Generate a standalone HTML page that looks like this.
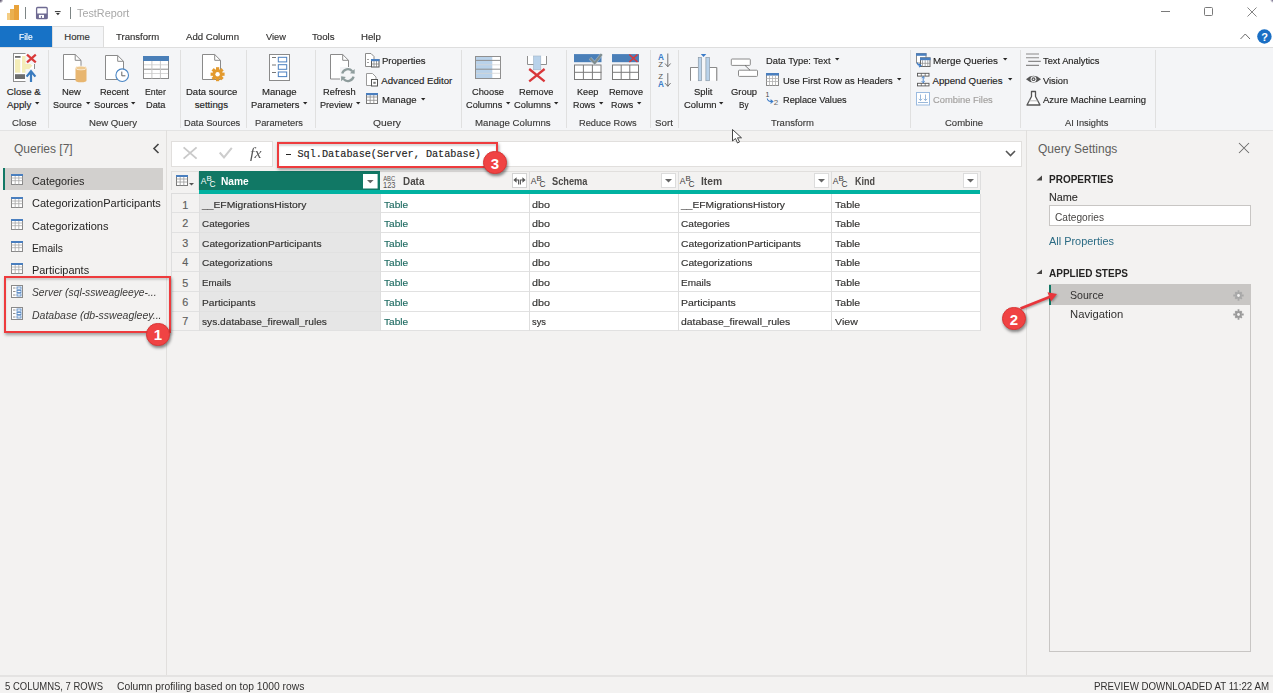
<!DOCTYPE html>
<html><head><meta charset="utf-8">
<style>
*{box-sizing:border-box;margin:0;padding:0}
html,body{width:1273px;height:693px;overflow:hidden;background:#f3f2f1;font-family:"Liberation Sans",sans-serif;color:#323130}
.a{position:absolute;white-space:nowrap}
div.a{-webkit-text-stroke:0.15px currentColor}
svg.a{overflow:visible}
</style></head><body>
<div class="a" style="left:0px;top:0px;width:1273px;height:47px;background:#ffffff;"></div>
<svg class="a" style="left:6px;top:4px;" width="14" height="17" viewBox="0 0 14 17"><rect x="1" y="9" width="5" height="7" fill="#f2c46f" opacity="0.85"/><rect x="4" y="5" width="5" height="11" fill="#eab04f"/><rect x="8" y="1" width="5" height="15" fill="#e8a23a"/></svg>
<div class="a" style="left:25px;top:7px;width:1px;height:12px;background:#7d8585;"></div>
<svg class="a" style="left:35px;top:6px;" width="14" height="14" viewBox="0 0 14 14"><rect x="1.6" y="1.5" width="10.6" height="11.2" rx="1" fill="#fff" stroke="#6e6a92" stroke-width="1.3"/><rect x="1.6" y="7.5" width="10.6" height="5.2" fill="#6e6a92"/><rect x="3.9" y="8.9" width="5.1" height="3" fill="#fff"/><rect x="5.9" y="9.9" width="1.1" height="2" fill="#6e6a92"/></svg>
<svg class="a" style="left:54px;top:10px;" width="8" height="7" viewBox="0 0 8 7"><rect x="0.9" y="1" width="5.7" height="1.1" fill="#444"/><path d="M1.9 3H5.9L3.9 5.3Z" fill="#333"/></svg>
<div class="a" style="left:70px;top:7px;width:1px;height:12px;background:#7d8585;"></div>
<div class="a" style="left:76.50px;top:6.50px;font-size:11px;line-height:13px;color:#a8a8a8;font-weight:normal;font-family:'Liberation Sans';;transform:scaleX(0.9830);transform-origin:0 50%;-webkit-text-stroke:0;">TestReport</div>
<div class="a" style="left:1161px;top:11px;width:9px;height:1px;background:#7a7a7a;"></div>
<div class="a" style="left:1204px;top:7px;width:9px;height:9px;background:none;border:1px solid #7a7a7a;border-radius:1.5px"></div>
<svg class="a" style="left:1247px;top:7px;" width="10" height="10" viewBox="0 0 10 10"><path d="M0.5 0.5L9.5 9.5M9.5 0.5L0.5 9.5" stroke="#777" stroke-width="0.9"/></svg>
<svg class="a" style="left:1240px;top:33px;" width="11" height="7" viewBox="0 0 11 7"><path d="M0.5 6L5.25 1L10 6" stroke="#6b6b6b" stroke-width="1" fill="none"/></svg>
<svg class="a" style="left:1257px;top:29px;" width="15" height="15" viewBox="0 0 15 15"><circle cx="7.4" cy="7.5" r="7.2" fill="#1a6fc4"/><text x="7.5" y="11.6" font-family="Liberation Sans" font-size="11" font-weight="bold" fill="#fff" text-anchor="middle">?</text></svg>
<div class="a" style="left:0px;top:26px;width:52px;height:21px;background:#1772c6;"></div>
<div class="a" style="left:52px;top:26px;width:52px;height:22px;background:#f4f5f7;border:1px solid #dcdcdc;border-bottom:none"></div>
<div class="a" style="left:18.50px;top:31.10px;font-size:9.6px;line-height:12px;color:#ffffff;font-weight:normal;font-family:'Liberation Sans';;transform:scaleX(0.8857);transform-origin:0 50%;">File</div>
<div class="a" style="left:64.30px;top:31.10px;font-size:9.6px;line-height:12px;color:#323130;font-weight:normal;font-family:'Liberation Sans';;">Home</div>
<div class="a" style="left:116.30px;top:31.10px;font-size:9.6px;line-height:12px;color:#323130;font-weight:normal;font-family:'Liberation Sans';;transform:scaleX(0.9963);transform-origin:0 50%;">Transform</div>
<div class="a" style="left:186.40px;top:31.10px;font-size:9.6px;line-height:12px;color:#323130;font-weight:normal;font-family:'Liberation Sans';;transform:scaleX(1.0038);transform-origin:0 50%;">Add Column</div>
<div class="a" style="left:265.80px;top:31.10px;font-size:9.6px;line-height:12px;color:#323130;font-weight:normal;font-family:'Liberation Sans';;transform:scaleX(0.9648);transform-origin:0 50%;">View</div>
<div class="a" style="left:312.00px;top:31.10px;font-size:9.6px;line-height:12px;color:#323130;font-weight:normal;font-family:'Liberation Sans';;transform:scaleX(1.0086);transform-origin:0 50%;">Tools</div>
<div class="a" style="left:361.30px;top:31.10px;font-size:9.6px;line-height:12px;color:#323130;font-weight:normal;font-family:'Liberation Sans';;transform:scaleX(1.0033);transform-origin:0 50%;">Help</div>
<div class="a" style="left:0px;top:47px;width:1273px;height:84px;background:#f4f5f7;border-top:1px solid #dedede;border-bottom:1px solid #e3e3e3"></div>
<div class="a" style="left:48px;top:50px;width:1px;height:78px;background:#e0e0e0;"></div>
<div class="a" style="left:180px;top:50px;width:1px;height:78px;background:#e0e0e0;"></div>
<div class="a" style="left:246px;top:50px;width:1px;height:78px;background:#e0e0e0;"></div>
<div class="a" style="left:315px;top:50px;width:1px;height:78px;background:#e0e0e0;"></div>
<div class="a" style="left:461px;top:50px;width:1px;height:78px;background:#e0e0e0;"></div>
<div class="a" style="left:566px;top:50px;width:1px;height:78px;background:#e0e0e0;"></div>
<div class="a" style="left:650px;top:50px;width:1px;height:78px;background:#e0e0e0;"></div>
<div class="a" style="left:678px;top:50px;width:1px;height:78px;background:#e0e0e0;"></div>
<div class="a" style="left:910px;top:50px;width:1px;height:78px;background:#e0e0e0;"></div>
<div class="a" style="left:1020px;top:50px;width:1px;height:78px;background:#e0e0e0;"></div>
<div class="a" style="left:1155px;top:50px;width:1px;height:78px;background:#e0e0e0;"></div>
<div class="a" style="left:6.80px;top:86.15px;font-size:9.7px;line-height:12px;color:#252423;font-weight:normal;font-family:'Liberation Sans';;">Close &amp;</div>
<div class="a" style="left:62.30px;top:86.15px;font-size:9.7px;line-height:12px;color:#252423;font-weight:normal;font-family:'Liberation Sans';;transform:scaleX(0.9747);transform-origin:0 50%;">New</div>
<div class="a" style="left:99.70px;top:86.15px;font-size:9.7px;line-height:12px;color:#252423;font-weight:normal;font-family:'Liberation Sans';;transform:scaleX(0.9413);transform-origin:0 50%;">Recent</div>
<div class="a" style="left:144.60px;top:86.15px;font-size:9.7px;line-height:12px;color:#252423;font-weight:normal;font-family:'Liberation Sans';;transform:scaleX(0.8982);transform-origin:0 50%;">Enter</div>
<div class="a" style="left:186.00px;top:86.15px;font-size:9.7px;line-height:12px;color:#252423;font-weight:normal;font-family:'Liberation Sans';;transform:scaleX(0.9821);transform-origin:0 50%;">Data source</div>
<div class="a" style="left:261.80px;top:86.15px;font-size:9.7px;line-height:12px;color:#252423;font-weight:normal;font-family:'Liberation Sans';;transform:scaleX(0.9881);transform-origin:0 50%;">Manage</div>
<div class="a" style="left:323.40px;top:86.15px;font-size:9.7px;line-height:12px;color:#252423;font-weight:normal;font-family:'Liberation Sans';;transform:scaleX(0.9610);transform-origin:0 50%;">Refresh</div>
<div class="a" style="left:472.00px;top:86.15px;font-size:9.7px;line-height:12px;color:#252423;font-weight:normal;font-family:'Liberation Sans';;transform:scaleX(0.9579);transform-origin:0 50%;">Choose</div>
<div class="a" style="left:518.60px;top:86.15px;font-size:9.7px;line-height:12px;color:#252423;font-weight:normal;font-family:'Liberation Sans';;transform:scaleX(0.9535);transform-origin:0 50%;">Remove</div>
<div class="a" style="left:576.70px;top:86.15px;font-size:9.7px;line-height:12px;color:#252423;font-weight:normal;font-family:'Liberation Sans';;transform:scaleX(0.9414);transform-origin:0 50%;">Keep</div>
<div class="a" style="left:608.50px;top:86.15px;font-size:9.7px;line-height:12px;color:#252423;font-weight:normal;font-family:'Liberation Sans';;transform:scaleX(0.9424);transform-origin:0 50%;">Remove</div>
<div class="a" style="left:694.20px;top:86.15px;font-size:9.7px;line-height:12px;color:#252423;font-weight:normal;font-family:'Liberation Sans';;transform:scaleX(0.9756);transform-origin:0 50%;">Split</div>
<div class="a" style="left:730.90px;top:86.15px;font-size:9.7px;line-height:12px;color:#252423;font-weight:normal;font-family:'Liberation Sans';;transform:scaleX(0.9689);transform-origin:0 50%;">Group</div>
<div class="a" style="left:7.10px;top:98.95px;font-size:9.7px;line-height:12px;color:#252423;font-weight:normal;font-family:'Liberation Sans';;">Apply</div>
<svg class="a" style="left:34.7px;top:101.6px;" width="5" height="3" viewBox="0 0 5 3"><path d="M0 0H4.4L2.2 2.6Z" fill="#252423"/></svg>
<div class="a" style="left:53.30px;top:98.95px;font-size:9.7px;line-height:12px;color:#252423;font-weight:normal;font-family:'Liberation Sans';;transform:scaleX(0.9348);transform-origin:0 50%;">Source</div>
<svg class="a" style="left:85.8px;top:101.6px;" width="5" height="3" viewBox="0 0 5 3"><path d="M0 0H4.4L2.2 2.6Z" fill="#252423"/></svg>
<div class="a" style="left:93.80px;top:98.95px;font-size:9.7px;line-height:12px;color:#252423;font-weight:normal;font-family:'Liberation Sans';;transform:scaleX(0.9621);transform-origin:0 50%;">Sources</div>
<svg class="a" style="left:131.2px;top:101.6px;" width="5" height="3" viewBox="0 0 5 3"><path d="M0 0H4.4L2.2 2.6Z" fill="#252423"/></svg>
<div class="a" style="left:145.70px;top:98.95px;font-size:9.7px;line-height:12px;color:#252423;font-weight:normal;font-family:'Liberation Sans';;transform:scaleX(0.9527);transform-origin:0 50%;">Data</div>
<div class="a" style="left:194.70px;top:98.95px;font-size:9.7px;line-height:12px;color:#252423;font-weight:normal;font-family:'Liberation Sans';;">settings</div>
<div class="a" style="left:251.10px;top:98.95px;font-size:9.7px;line-height:12px;color:#252423;font-weight:normal;font-family:'Liberation Sans';;transform:scaleX(0.9665);transform-origin:0 50%;">Parameters</div>
<svg class="a" style="left:303.4px;top:101.6px;" width="5" height="3" viewBox="0 0 5 3"><path d="M0 0H4.4L2.2 2.6Z" fill="#252423"/></svg>
<div class="a" style="left:320.00px;top:98.95px;font-size:9.7px;line-height:12px;color:#252423;font-weight:normal;font-family:'Liberation Sans';;transform:scaleX(0.9400);transform-origin:0 50%;">Preview</div>
<svg class="a" style="left:355.7px;top:101.6px;" width="5" height="3" viewBox="0 0 5 3"><path d="M0 0H4.4L2.2 2.6Z" fill="#252423"/></svg>
<div class="a" style="left:466.10px;top:98.95px;font-size:9.7px;line-height:12px;color:#252423;font-weight:normal;font-family:'Liberation Sans';;transform:scaleX(0.9494);transform-origin:0 50%;">Columns</div>
<svg class="a" style="left:506.2px;top:101.6px;" width="5" height="3" viewBox="0 0 5 3"><path d="M0 0H4.4L2.2 2.6Z" fill="#252423"/></svg>
<div class="a" style="left:514.20px;top:98.95px;font-size:9.7px;line-height:12px;color:#252423;font-weight:normal;font-family:'Liberation Sans';;transform:scaleX(0.9625);transform-origin:0 50%;">Columns</div>
<svg class="a" style="left:554.3px;top:101.6px;" width="5" height="3" viewBox="0 0 5 3"><path d="M0 0H4.4L2.2 2.6Z" fill="#252423"/></svg>
<div class="a" style="left:573.00px;top:98.95px;font-size:9.7px;line-height:12px;color:#252423;font-weight:normal;font-family:'Liberation Sans';;transform:scaleX(0.9161);transform-origin:0 50%;">Rows</div>
<svg class="a" style="left:598.9px;top:101.6px;" width="5" height="3" viewBox="0 0 5 3"><path d="M0 0H4.4L2.2 2.6Z" fill="#252423"/></svg>
<div class="a" style="left:610.70px;top:98.95px;font-size:9.7px;line-height:12px;color:#252423;font-weight:normal;font-family:'Liberation Sans';;transform:scaleX(0.9161);transform-origin:0 50%;">Rows</div>
<svg class="a" style="left:636.6px;top:101.6px;" width="5" height="3" viewBox="0 0 5 3"><path d="M0 0H4.4L2.2 2.6Z" fill="#252423"/></svg>
<div class="a" style="left:683.90px;top:98.95px;font-size:9.7px;line-height:12px;color:#252423;font-weight:normal;font-family:'Liberation Sans';;transform:scaleX(0.9733);transform-origin:0 50%;">Column</div>
<svg class="a" style="left:719.1px;top:101.6px;" width="5" height="3" viewBox="0 0 5 3"><path d="M0 0H4.4L2.2 2.6Z" fill="#252423"/></svg>
<div class="a" style="left:739.40px;top:98.95px;font-size:9.7px;line-height:12px;color:#252423;font-weight:normal;font-family:'Liberation Sans';;transform:scaleX(0.8398);transform-origin:0 50%;">By</div>
<div class="a" style="left:11.50px;top:117.45px;font-size:9.7px;line-height:12px;color:#3b3a39;font-weight:normal;font-family:'Liberation Sans';;transform:scaleX(0.9887);transform-origin:0 50%;">Close</div>
<div class="a" style="left:89.00px;top:117.45px;font-size:9.7px;line-height:12px;color:#3b3a39;font-weight:normal;font-family:'Liberation Sans';;transform:scaleX(0.9906);transform-origin:0 50%;">New Query</div>
<div class="a" style="left:183.80px;top:117.45px;font-size:9.7px;line-height:12px;color:#3b3a39;font-weight:normal;font-family:'Liberation Sans';;transform:scaleX(0.9574);transform-origin:0 50%;">Data Sources</div>
<div class="a" style="left:254.90px;top:117.45px;font-size:9.7px;line-height:12px;color:#3b3a39;font-weight:normal;font-family:'Liberation Sans';;transform:scaleX(0.9585);transform-origin:0 50%;">Parameters</div>
<div class="a" style="left:372.50px;top:117.45px;font-size:9.7px;line-height:12px;color:#3b3a39;font-weight:normal;font-family:'Liberation Sans';;transform:scaleX(1.0610);transform-origin:0 50%;">Query</div>
<div class="a" style="left:474.50px;top:117.45px;font-size:9.7px;line-height:12px;color:#3b3a39;font-weight:normal;font-family:'Liberation Sans';;transform:scaleX(0.9969);transform-origin:0 50%;">Manage Columns</div>
<div class="a" style="left:578.60px;top:117.45px;font-size:9.7px;line-height:12px;color:#3b3a39;font-weight:normal;font-family:'Liberation Sans';;transform:scaleX(0.9550);transform-origin:0 50%;">Reduce Rows</div>
<div class="a" style="left:654.60px;top:117.45px;font-size:9.7px;line-height:12px;color:#3b3a39;font-weight:normal;font-family:'Liberation Sans';;transform:scaleX(1.0067);transform-origin:0 50%;">Sort</div>
<div class="a" style="left:771.40px;top:117.45px;font-size:9.7px;line-height:12px;color:#3b3a39;font-weight:normal;font-family:'Liberation Sans';;transform:scaleX(0.9799);transform-origin:0 50%;">Transform</div>
<div class="a" style="left:944.60px;top:117.45px;font-size:9.7px;line-height:12px;color:#3b3a39;font-weight:normal;font-family:'Liberation Sans';;transform:scaleX(0.9824);transform-origin:0 50%;">Combine</div>
<div class="a" style="left:1064.60px;top:117.45px;font-size:9.7px;line-height:12px;color:#3b3a39;font-weight:normal;font-family:'Liberation Sans';;transform:scaleX(0.9572);transform-origin:0 50%;">AI Insights</div>
<div class="a" style="left:381.50px;top:55.25px;font-size:9.7px;line-height:12px;color:#252423;font-weight:normal;font-family:'Liberation Sans';;transform:scaleX(0.9851);transform-origin:0 50%;">Properties</div>
<div class="a" style="left:381.20px;top:74.55px;font-size:9.7px;line-height:12px;color:#252423;font-weight:normal;font-family:'Liberation Sans';;">Advanced Editor</div>
<div class="a" style="left:381.50px;top:93.70px;font-size:9.7px;line-height:12px;color:#252423;font-weight:normal;font-family:'Liberation Sans';;transform:scaleX(0.9881);transform-origin:0 50%;">Manage</div>
<svg class="a" style="left:420.7px;top:97.5px;" width="5" height="3" viewBox="0 0 5 3"><path d="M0 0H4.4L2.2 2.6Z" fill="#252423"/></svg>
<div class="a" style="left:765.50px;top:55.25px;font-size:9.7px;line-height:12px;color:#252423;font-weight:normal;font-family:'Liberation Sans';;transform:scaleX(0.9631);transform-origin:0 50%;">Data Type: Text</div>
<svg class="a" style="left:834.5px;top:58.4px;" width="5" height="3" viewBox="0 0 5 3"><path d="M0 0H4.4L2.2 2.6Z" fill="#252423"/></svg>
<div class="a" style="left:782.70px;top:74.55px;font-size:9.7px;line-height:12px;color:#252423;font-weight:normal;font-family:'Liberation Sans';;transform:scaleX(0.9711);transform-origin:0 50%;">Use First Row as Headers</div>
<svg class="a" style="left:897px;top:77.6px;" width="5" height="3" viewBox="0 0 5 3"><path d="M0 0H4.4L2.2 2.6Z" fill="#252423"/></svg>
<div class="a" style="left:782.70px;top:93.70px;font-size:9.7px;line-height:12px;color:#252423;font-weight:normal;font-family:'Liberation Sans';;transform:scaleX(0.9488);transform-origin:0 50%;">Replace Values</div>
<div class="a" style="left:932.50px;top:55.25px;font-size:9.7px;line-height:12px;color:#252423;font-weight:normal;font-family:'Liberation Sans';;transform:scaleX(1.0144);transform-origin:0 50%;">Merge Queries</div>
<svg class="a" style="left:1002.5px;top:58.4px;" width="5" height="3" viewBox="0 0 5 3"><path d="M0 0H4.4L2.2 2.6Z" fill="#252423"/></svg>
<div class="a" style="left:932.50px;top:74.55px;font-size:9.7px;line-height:12px;color:#252423;font-weight:normal;font-family:'Liberation Sans';;">Append Queries</div>
<svg class="a" style="left:1007.5px;top:77.6px;" width="5" height="3" viewBox="0 0 5 3"><path d="M0 0H4.4L2.2 2.6Z" fill="#252423"/></svg>
<div class="a" style="left:932.50px;top:93.70px;font-size:9.7px;line-height:12px;color:#a19f9d;font-weight:normal;font-family:'Liberation Sans';;transform:scaleX(0.9657);transform-origin:0 50%;">Combine Files</div>
<div class="a" style="left:1043.30px;top:55.25px;font-size:9.7px;line-height:12px;color:#252423;font-weight:normal;font-family:'Liberation Sans';;transform:scaleX(0.9610);transform-origin:0 50%;">Text Analytics</div>
<div class="a" style="left:1043.30px;top:74.55px;font-size:9.7px;line-height:12px;color:#252423;font-weight:normal;font-family:'Liberation Sans';;transform:scaleX(0.9611);transform-origin:0 50%;">Vision</div>
<div class="a" style="left:1043.30px;top:93.70px;font-size:9.7px;line-height:12px;color:#252423;font-weight:normal;font-family:'Liberation Sans';;transform:scaleX(0.9818);transform-origin:0 50%;">Azure Machine Learning</div>
<svg class="a" style="left:0;top:0" width="1273" height="693" viewBox="0 0 1273 693"><rect x="13.5" y="53.5" width="21" height="28" fill="#fff" stroke="#8f8f8f"/><rect x="15" y="56" width="5.6" height="1.8" fill="#6d6d6d"/><rect x="15" y="59.3" width="5.3" height="13.4" fill="#f4edb8"/><path d="M22 56H26V61L32.5 65.5L26 72.7H22Z" fill="#f4edb8"/><rect x="15" y="74.2" width="10" height="4.8" fill="#6d6d6d"/><rect x="25.5" y="53" width="11.5" height="11" fill="#f4f5f7"/><rect x="25.5" y="69" width="11.5" height="13.5" fill="#f4f5f7"/><path d="M27 54.6L35.8 62.4M35.8 54.6L27 62.4" stroke="#d93a3a" stroke-width="2.2"/><path d="M26.6 76.6L31 71.2L35.4 76.6M31 71.5V82" stroke="#3a7bbf" stroke-width="2.2" fill="none"/><path d="M63.5 54.5H75.2L81.0 60.3V79.5H63.5Z" fill="#fff" stroke="#8a8a8a"/><path d="M75.2 54.5V60.3H81.0" fill="none" stroke="#8a8a8a"/><path d="M75.5 68V80.5A5.5 1.8 0 0 0 86.5 80.5V68Z" fill="#e8b670"/><ellipse cx="81" cy="68" rx="5.5" ry="1.9" fill="#efc98f" stroke="#fff" stroke-width="0.6"/><path d="M105.5 55.5H117.7L123.5 61.3V79.5H105.5Z" fill="#fff" stroke="#8a8a8a"/><path d="M117.7 55.5V61.3H123.5" fill="none" stroke="#8a8a8a"/><circle cx="122.2" cy="75.2" r="6.3" fill="#fff" stroke="#4a86c5" stroke-width="1.1"/><path d="M121.8 71.6V75.8H125.4" stroke="#555" stroke-width="0.9" fill="none"/><rect x="143.5" y="56.5" width="25" height="22" fill="#fff" stroke="#8a8a8a"/><rect x="143" y="56" width="26" height="5" fill="#4a7fb8"/><path d="M144 64.8H168M144 73.5H168" stroke="#d8d8d8" stroke-width="1"/><path d="M144 69.2H168" stroke="#8a8a8a" stroke-width="1"/><path d="M151.9 61V78.5M160.4 61V78.5" stroke="#c8c8c8" stroke-width="1"/><path d="M202.5 54.5H214.7L220.5 60.3V79.5H202.5Z" fill="#fff" stroke="#8a8a8a"/><path d="M214.7 54.5V60.3H220.5" fill="none" stroke="#8a8a8a"/><g transform="translate(217.6 74.2)"><g fill="#e39a2e"><rect x="-1.6" y="-7" width="3.2" height="3.4" transform="rotate(0)"/><rect x="-1.6" y="-7" width="3.2" height="3.4" transform="rotate(45)"/><rect x="-1.6" y="-7" width="3.2" height="3.4" transform="rotate(90)"/><rect x="-1.6" y="-7" width="3.2" height="3.4" transform="rotate(135)"/><rect x="-1.6" y="-7" width="3.2" height="3.4" transform="rotate(180)"/><rect x="-1.6" y="-7" width="3.2" height="3.4" transform="rotate(225)"/><rect x="-1.6" y="-7" width="3.2" height="3.4" transform="rotate(270)"/><rect x="-1.6" y="-7" width="3.2" height="3.4" transform="rotate(315)"/><circle r="5"/></g><circle r="2.2" fill="#fff"/></g><rect x="269.5" y="54.5" width="20" height="26" fill="#fff" stroke="#8a8a8a"/><path d="M272 57.5H276M272 65H276M272 72.5H276" stroke="#777" stroke-width="1"/><rect x="278.3" y="57.3" width="8.4" height="4.6" fill="#fff" stroke="#4a7fbf" stroke-width="1"/><rect x="278.3" y="64.7" width="8.4" height="4.6" fill="#fff" stroke="#4a7fbf" stroke-width="1"/><rect x="278.3" y="72" width="8.4" height="4.6" fill="#fff" stroke="#4a7fbf" stroke-width="1"/><path d="M330.5 54.5H342.7L348.5 60.3V79.0H330.5Z" fill="#fff" stroke="#8a8a8a"/><path d="M342.7 54.5V60.3H348.5" fill="none" stroke="#8a8a8a"/><rect x="340" y="67" width="15.5" height="15.5" fill="#f4f5f7"/><path d="M342.20 73.57A5.9 5.9 0 0 1 352.28 71.15M353.60 76.63A5.9 5.9 0 0 1 343.52 79.05" stroke="#8e9c9c" stroke-width="2.3" fill="none"/><path d="M354.69 73.83L354.66 69.01L349.91 73.29Z M341.11 76.37L341.14 81.19L345.89 76.91Z" fill="#8e9c9c"/><path d="M365.5 53.5H371L374 56.5V66.5H365.5Z" fill="#fff" stroke="#8a8a8a"/><path d="M367 59.5H369M367 62.5H369" stroke="#888" stroke-width="0.8"/><rect x="371.5" y="59.5" width="7.5" height="7.5" fill="#fff" stroke="#555"/><rect x="371" y="59" width="8.5" height="2.2" fill="#4a7fbf"/><path d="M374 61V67M376.5 61V67M371.5 64H379" stroke="#777" stroke-width="0.7"/><path d="M366.5 73.5H372.5L376 77V85.5H366.5Z" fill="#fff" stroke="#9a9a9a"/><rect x="371.5" y="79.5" width="6" height="6.5" fill="#fff" stroke="#555"/><rect x="373.3" y="81.8" width="2.4" height="2" fill="#777"/><rect x="366.5" y="93.5" width="11" height="10" fill="#fff" stroke="#777"/><rect x="366" y="93" width="12" height="2.2" fill="#4a7fbf"/><path d="M366.5 97H377.5M366.5 100.3H377.5M370.2 95V103.5M373.8 95V103.5" stroke="#8a8a8a" stroke-width="0.8"/><rect x="475.5" y="56.5" width="25" height="22" fill="#fff" stroke="#8f8f8f"/><rect x="476" y="57" width="16.3" height="21" fill="#b9d2ea"/><path d="M476 60.4H500M476 69.2H500" stroke="#8f8f8f" stroke-width="1"/><path d="M476 64.8H500M476 73.3H500" stroke="#d6d6d6" stroke-width="0.8"/><path d="M527.5 56V64.5H546.5V56" fill="#fff" stroke="#8f8f8f"/><rect x="533.5" y="56" width="7.3" height="13.8" fill="#b9d2ea" stroke="#9fb4c8" stroke-width="0.6"/><path d="M529.2 69L544.6 81.4M544.6 69L529.2 81.4" stroke="#d9373a" stroke-width="2.3"/><rect x="574.5" y="65" width="26.5" height="14.5" fill="#fff" stroke="#7a7a7a"/><path d="M574 72.3H601.5M583.4 65V79.5M592.4 65V79.5" stroke="#7a7a7a" stroke-width="1"/><rect x="574" y="54.1" width="27.5" height="8.1" fill="#4a7fb8"/><rect x="612.5" y="65" width="26" height="14.5" fill="#fff" stroke="#7a7a7a"/><path d="M612 72.3H639M621.2 65V79.5M629.8 65V79.5" stroke="#7a7a7a" stroke-width="1"/><rect x="612" y="54.1" width="27" height="8.1" fill="#4a7fb8"/><path d="M590 58.3L594.7 63.2L601.7 54.2" stroke="#c8d2dc" stroke-width="3.4" fill="none" opacity="0.6"/><path d="M590 58.3L594.7 63.2L601.7 54.2" stroke="#7f8c8d" stroke-width="2.1" fill="none"/><path d="M629.3 54.5L637.5 62M637.5 54.5L629.3 62" stroke="#d9373a" stroke-width="1.6"/><text x="658" y="59.9" font-family="Liberation Sans" font-weight="bold" font-size="8.2" fill="#3a7bc8">A</text><text x="658.3" y="66.9" font-family="Liberation Sans" font-size="7.8" fill="#555">Z</text><path d="M667.8 53.5V66.7M665 63.5L667.8 66.7L670.6 63.5" stroke="#666" stroke-width="0.9" fill="none"/><text x="658" y="86.5" font-family="Liberation Sans" font-weight="bold" font-size="8.2" fill="#3a7bc8">A</text><text x="658.3" y="79.3" font-family="Liberation Sans" font-size="7.8" fill="#555">Z</text><path d="M667.8 73.1V86.3M665 83.1L667.8 86.3L670.6 83.1" stroke="#666" stroke-width="0.9" fill="none"/><path d="M690.5 80.7V67.5H698M709.7 67.5H716.7V80.7" stroke="#8a8a8a" fill="#fff"/><rect x="690.5" y="67.5" width="7.5" height="13" fill="#fff"/><rect x="709.7" y="67.5" width="7" height="13" fill="#fff"/><path d="M690.5 80.7V67.5H698M709.7 67.5H716.7V80.7" stroke="#8a8a8a" fill="none"/><rect x="698.3" y="57.5" width="3.2" height="23.2" fill="#b9d2ea" stroke="#8a9aa8" stroke-width="0.7"/><rect x="705.9" y="57.5" width="3.6" height="23.2" fill="#b9d2ea" stroke="#8a9aa8" stroke-width="0.7"/><path d="M700.8 53.9H706.3L703.55 56.9Z" fill="#3a7bc8"/><rect x="731.3" y="59" width="19" height="6.4" rx="0.8" fill="#fff" stroke="#8a8a8a"/><rect x="738.5" y="70.2" width="19" height="6.2" rx="0.8" fill="#fff" stroke="#8a8a8a"/><path d="M745 65.4L750 70.2" stroke="#555" stroke-width="0.8"/><rect x="766.5" y="73.5" width="12" height="12" fill="#fff" stroke="#8a8a8a"/><rect x="766" y="73" width="13" height="2.6" fill="#4a7fbf"/><path d="M766.5 78.5H778.5M766.5 81.5H778.5M769.5 75V85.5M772.5 75V85.5M775.5 75V85.5" stroke="#b0b0b0" stroke-width="0.8"/><text x="765.5" y="97.2" font-family="Liberation Sans" font-size="7" fill="#444">1</text><text x="773.7" y="104.5" font-family="Liberation Sans" font-size="8" fill="#666">2</text><path d="M767.3 98.5Q767.5 101.6 772.5 101.6M770.5 99.8L772.8 101.6L770.5 103.4" stroke="#3a7bc8" stroke-width="1.1" fill="none"/><rect x="916.5" y="53.5" width="9.5" height="9.5" fill="#fff" stroke="#8a8a8a"/><rect x="916" y="53.3" width="10.5" height="2.5" fill="#4a7fbf"/><rect x="920.5" y="57.8" width="9.5" height="8.7" fill="#fff" stroke="#666"/><rect x="920" y="57.6" width="10.5" height="2.6" fill="#4a7fbf"/><path d="M922.5 60.2V66.5M925.2 60.2V66.5M927.8 60.2V66.5M920.5 63.3H930" stroke="#888" stroke-width="0.7"/><path d="M917.3 62.5Q917.3 65.5 920.8 65.5M919 63.8L921 65.5L919 67.2" stroke="#3a7bc8" stroke-width="1.1" fill="none"/><rect x="917.5" y="73.3" width="11.5" height="2.8" fill="#fff" stroke="#555" stroke-width="0.9"/><path d="M921.3 73.3V76M925.2 73.3V76" stroke="#555" stroke-width="0.7"/><rect x="917.5" y="83.3" width="11.5" height="2.6" fill="#fff" stroke="#555" stroke-width="0.9"/><path d="M921.3 83.3V86M925.2 83.3V86" stroke="#555" stroke-width="0.7"/><path d="M923.2 76.5V82.8M921.6 78.2L923.2 76.6L924.8 78.2M921.6 81.1L923.2 82.7L924.8 81.1" stroke="#3a7bc8" stroke-width="0.9" fill="none"/><rect x="916.5" y="92.5" width="13" height="12.5" fill="#fff" stroke="#9bbbe0"/><path d="M920.5 94.5V100.5M918.8 98.8L920.5 100.6L922.2 98.8M925.5 94.5V100.5M923.8 98.8L925.5 100.6L927.2 98.8M918 102.5H928" stroke="#8fb0d6" stroke-width="0.9" fill="none"/><path d="M1026 54H1039M1026 57.7H1039M1028.2 61.4H1040.8M1026 65.4H1039" stroke="#8a8a8a" stroke-width="1.1"/><path d="M1026 79.2Q1033.5 72.5 1041 79.2Q1033.5 86 1026 79.2Z" fill="#555"/><circle cx="1033.5" cy="79.2" r="2.9" fill="#f4f5f7"/><circle cx="1033.5" cy="79.2" r="1.9" fill="#555"/><circle cx="1033.5" cy="79.2" r="0.8" fill="#f4f5f7"/><path d="M1031.5 91.5H1035.5V96.5L1040 105H1027L1031.5 96.5Z" fill="#fff" stroke="#555" stroke-width="1.3" stroke-linejoin="round"/><path d="M1029.3 100.8H1037.7" stroke="#aaa" stroke-width="0.8"/></svg>
<div class="a" style="left:166px;top:130px;width:1px;height:545px;background:#e1dfdd;"></div>
<div class="a" style="left:1026px;top:130px;width:1px;height:545px;background:#e1dfdd;"></div>
<div class="a" style="left:0px;top:675px;width:1273px;height:2px;background:#e4e3e2;"></div>
<div class="a" style="left:14.00px;top:142.10px;font-size:12px;line-height:14px;color:#605e5c;font-weight:normal;font-family:'Liberation Sans';;-webkit-text-stroke:0;">Queries [7]</div>
<svg class="a" style="left:152px;top:143px;" width="8" height="11" viewBox="0 0 8 11"><path d="M6.5 1L2 5.5L6.5 10" stroke="#444" stroke-width="1.6" fill="none"/></svg>
<div class="a" style="left:3px;top:168px;width:160px;height:22px;background:#d2d0ce;"></div>
<div class="a" style="left:3px;top:168px;width:2px;height:22px;background:#117865;"></div>
<svg class="a" style="left:11px;top:174.4px;" width="12" height="11" viewBox="0 0 12 11"><rect x="0.5" y="0.5" width="11" height="10" fill="#fff" stroke="#8a8a8a"/><rect x="0" y="0" width="12" height="2" fill="#4a7fbf"/><path d="M0.5 4H11.5M0.5 6.7H11.5M4.2 2V10.5M7.8 2V10.5" stroke="#a8a8a8" stroke-width="0.8"/></svg>
<div class="a" style="left:32.40px;top:174.10px;font-size:11.4px;line-height:14px;color:#252423;font-weight:normal;font-family:'Liberation Sans';;transform:scaleX(0.9529);transform-origin:0 50%;-webkit-text-stroke:0;">Categories</div>
<svg class="a" style="left:11px;top:196.75px;" width="12" height="11" viewBox="0 0 12 11"><rect x="0.5" y="0.5" width="11" height="10" fill="#fff" stroke="#8a8a8a"/><rect x="0" y="0" width="12" height="2" fill="#4a7fbf"/><path d="M0.5 4H11.5M0.5 6.7H11.5M4.2 2V10.5M7.8 2V10.5" stroke="#a8a8a8" stroke-width="0.8"/></svg>
<div class="a" style="left:32.40px;top:196.45px;font-size:11.4px;line-height:14px;color:#252423;font-weight:normal;font-family:'Liberation Sans';;transform:scaleX(0.9694);transform-origin:0 50%;-webkit-text-stroke:0;">CategorizationParticipants</div>
<svg class="a" style="left:11px;top:219px;" width="12" height="11" viewBox="0 0 12 11"><rect x="0.5" y="0.5" width="11" height="10" fill="#fff" stroke="#8a8a8a"/><rect x="0" y="0" width="12" height="2" fill="#4a7fbf"/><path d="M0.5 4H11.5M0.5 6.7H11.5M4.2 2V10.5M7.8 2V10.5" stroke="#a8a8a8" stroke-width="0.8"/></svg>
<div class="a" style="left:32.40px;top:218.70px;font-size:11.4px;line-height:14px;color:#252423;font-weight:normal;font-family:'Liberation Sans';;transform:scaleX(0.9664);transform-origin:0 50%;-webkit-text-stroke:0;">Categorizations</div>
<svg class="a" style="left:11px;top:241.2px;" width="12" height="11" viewBox="0 0 12 11"><rect x="0.5" y="0.5" width="11" height="10" fill="#fff" stroke="#8a8a8a"/><rect x="0" y="0" width="12" height="2" fill="#4a7fbf"/><path d="M0.5 4H11.5M0.5 6.7H11.5M4.2 2V10.5M7.8 2V10.5" stroke="#a8a8a8" stroke-width="0.8"/></svg>
<div class="a" style="left:32.40px;top:240.90px;font-size:11.4px;line-height:14px;color:#252423;font-weight:normal;font-family:'Liberation Sans';;transform:scaleX(0.9009);transform-origin:0 50%;-webkit-text-stroke:0;">Emails</div>
<svg class="a" style="left:11px;top:263.4px;" width="12" height="11" viewBox="0 0 12 11"><rect x="0.5" y="0.5" width="11" height="10" fill="#fff" stroke="#8a8a8a"/><rect x="0" y="0" width="12" height="2" fill="#4a7fbf"/><path d="M0.5 4H11.5M0.5 6.7H11.5M4.2 2V10.5M7.8 2V10.5" stroke="#a8a8a8" stroke-width="0.8"/></svg>
<div class="a" style="left:32.40px;top:263.10px;font-size:11.4px;line-height:14px;color:#252423;font-weight:normal;font-family:'Liberation Sans';;transform:scaleX(0.9594);transform-origin:0 50%;-webkit-text-stroke:0;">Participants</div>
<svg class="a" style="left:11px;top:285.1px;" width="12" height="13" viewBox="0 0 12 13"><rect x="0.5" y="0.5" width="11" height="12" fill="#fff" stroke="#8a8a8a"/><path d="M2 3H4.5M2 6.5H4.5M2 10H4.5" stroke="#777" stroke-width="0.8"/><rect x="6" y="2" width="4" height="2.2" fill="none" stroke="#4a7fbf" stroke-width="0.8"/><rect x="6" y="5.4" width="4" height="2.2" fill="none" stroke="#4a7fbf" stroke-width="0.8"/><rect x="6" y="8.8" width="4" height="2.2" fill="none" stroke="#4a7fbf" stroke-width="0.8"/></svg>
<div class="a" style="left:32.40px;top:285.30px;font-size:11.4px;line-height:14px;color:#3b3a39;font-weight:normal;font-family:'Liberation Sans';font-style:italic;transform:scaleX(0.9021);transform-origin:0 50%;-webkit-text-stroke:0;">Server (sql-ssweagleeye-...</div>
<svg class="a" style="left:11px;top:307.4px;" width="12" height="13" viewBox="0 0 12 13"><rect x="0.5" y="0.5" width="11" height="12" fill="#fff" stroke="#8a8a8a"/><path d="M2 3H4.5M2 6.5H4.5M2 10H4.5" stroke="#777" stroke-width="0.8"/><rect x="6" y="2" width="4" height="2.2" fill="none" stroke="#4a7fbf" stroke-width="0.8"/><rect x="6" y="5.4" width="4" height="2.2" fill="none" stroke="#4a7fbf" stroke-width="0.8"/><rect x="6" y="8.8" width="4" height="2.2" fill="none" stroke="#4a7fbf" stroke-width="0.8"/></svg>
<div class="a" style="left:32.40px;top:307.60px;font-size:11.4px;line-height:14px;color:#3b3a39;font-weight:normal;font-family:'Liberation Sans';font-style:italic;transform:scaleX(0.9226);transform-origin:0 50%;-webkit-text-stroke:0;">Database (db-ssweagleey...</div>
<div class="a" style="left:171px;top:141px;width:102px;height:26px;background:#ffffff;border:1px solid #e1dfdd"></div>
<svg class="a" style="left:183px;top:147px;" width="14" height="12" viewBox="0 0 14 12"><path d="M0.6 0.4L13.6 11.6M13.6 0.4L0.6 11.6" stroke="#c9c9c9" stroke-width="1.9"/></svg>
<svg class="a" style="left:218px;top:147px;" width="15" height="12" viewBox="0 0 15 12"><path d="M1.7 5.5L6 10.5L13.8 0.8" stroke="#cdcdcd" stroke-width="2" fill="none"/></svg>
<div class="a" style="left:250.00px;top:144.70px;font-size:14.5px;line-height:17px;color:#555555;font-weight:normal;font-family:'Liberation Serif';font-style:italic;transform:scaleX(1.0985);transform-origin:0 50%;-webkit-text-stroke:0;">fx</div>
<div class="a" style="left:277px;top:141px;width:745px;height:26px;background:#ffffff;border:1px solid #e1dfdd"></div>
<svg class="a" style="left:1005px;top:150px;" width="11" height="7" viewBox="0 0 11 7"><path d="M1 1L5.5 5.5L10 1" stroke="#555" stroke-width="1.6" fill="none"/></svg>
<div class="a" style="left:297.50px;top:148.60px;font-size:10.2px;line-height:12px;color:#252423;font-weight:normal;font-family:'Liberation Mono';;">Sql.Database(Server, Database)</div>
<div class="a" style="left:285.7px;top:153.5px;width:5.5px;height:1.7px;background:#252423;"></div>
<div class="a" style="left:171px;top:171px;width:809px;height:19px;background:#f3f2f1;border-top:1px solid #e1dfdd"></div>
<div class="a" style="left:199px;top:171px;width:181px;height:19px;background:#117865;"></div>
<div class="a" style="left:199px;top:190px;width:781px;height:4px;background:#01b2a1;"></div>
<div class="a" style="left:171px;top:194px;width:28px;height:19.400000000000006px;background:#f3f2f1;"></div>
<div class="a" style="left:199px;top:194px;width:181px;height:19.400000000000006px;background:#e6e6e6;"></div>
<div class="a" style="left:380px;top:194px;width:600px;height:19.400000000000006px;background:#ffffff;"></div>
<div class="a" style="left:171px;top:213.4px;width:28px;height:19.5px;background:#f3f2f1;"></div>
<div class="a" style="left:199px;top:213.4px;width:181px;height:19.5px;background:#e6e6e6;"></div>
<div class="a" style="left:380px;top:213.4px;width:600px;height:19.5px;background:#ffffff;"></div>
<div class="a" style="left:171px;top:232.9px;width:28px;height:19.900000000000006px;background:#f3f2f1;"></div>
<div class="a" style="left:199px;top:232.9px;width:181px;height:19.900000000000006px;background:#e6e6e6;"></div>
<div class="a" style="left:380px;top:232.9px;width:600px;height:19.900000000000006px;background:#ffffff;"></div>
<div class="a" style="left:171px;top:252.8px;width:28px;height:19.30000000000001px;background:#f3f2f1;"></div>
<div class="a" style="left:199px;top:252.8px;width:181px;height:19.30000000000001px;background:#e6e6e6;"></div>
<div class="a" style="left:380px;top:252.8px;width:600px;height:19.30000000000001px;background:#ffffff;"></div>
<div class="a" style="left:171px;top:272.1px;width:28px;height:19.399999999999977px;background:#f3f2f1;"></div>
<div class="a" style="left:199px;top:272.1px;width:181px;height:19.399999999999977px;background:#e6e6e6;"></div>
<div class="a" style="left:380px;top:272.1px;width:600px;height:19.399999999999977px;background:#ffffff;"></div>
<div class="a" style="left:171px;top:291.5px;width:28px;height:20.0px;background:#f3f2f1;"></div>
<div class="a" style="left:199px;top:291.5px;width:181px;height:20.0px;background:#e6e6e6;"></div>
<div class="a" style="left:380px;top:291.5px;width:600px;height:20.0px;background:#ffffff;"></div>
<div class="a" style="left:171px;top:311.5px;width:28px;height:19.0px;background:#f3f2f1;"></div>
<div class="a" style="left:199px;top:311.5px;width:181px;height:19.0px;background:#e6e6e6;"></div>
<div class="a" style="left:380px;top:311.5px;width:600px;height:19.0px;background:#ffffff;"></div>
<div class="a" style="left:171px;top:212.4px;width:809px;height:1px;background:#e1e1e1;"></div>
<div class="a" style="left:171px;top:231.9px;width:809px;height:1px;background:#e1e1e1;"></div>
<div class="a" style="left:171px;top:251.8px;width:809px;height:1px;background:#e1e1e1;"></div>
<div class="a" style="left:171px;top:271.1px;width:809px;height:1px;background:#e1e1e1;"></div>
<div class="a" style="left:171px;top:290.5px;width:809px;height:1px;background:#e1e1e1;"></div>
<div class="a" style="left:171px;top:310.5px;width:809px;height:1px;background:#e1e1e1;"></div>
<div class="a" style="left:171px;top:329.5px;width:809px;height:1px;background:#e1e1e1;"></div>
<div class="a" style="left:171px;top:194px;width:1px;height:137px;background:#dedede;"></div>
<div class="a" style="left:199px;top:194px;width:1px;height:137px;background:#dedede;"></div>
<div class="a" style="left:380px;top:194px;width:1px;height:137px;background:#dedede;"></div>
<div class="a" style="left:529px;top:194px;width:1px;height:137px;background:#dedede;"></div>
<div class="a" style="left:678px;top:194px;width:1px;height:137px;background:#dedede;"></div>
<div class="a" style="left:831px;top:194px;width:1px;height:137px;background:#dedede;"></div>
<div class="a" style="left:980px;top:194px;width:1px;height:137px;background:#dedede;"></div>
<div class="a" style="left:171px;top:171px;width:1px;height:19px;background:#dedede;"></div>
<div class="a" style="left:529px;top:171px;width:1px;height:19px;background:#dedede;"></div>
<div class="a" style="left:678px;top:171px;width:1px;height:19px;background:#dedede;"></div>
<div class="a" style="left:831px;top:171px;width:1px;height:19px;background:#dedede;"></div>
<div class="a" style="left:980px;top:171px;width:1px;height:19px;background:#dedede;"></div>
<div class="a" style="left:198px;top:171px;width:1px;height:19px;background:#dedede;"></div>
<div class="a" style="left:171px;top:192.5px;width:28px;height:1px;background:#dcdcdc;"></div>
<svg class="a" style="left:176px;top:175px;" width="19" height="11" viewBox="0 0 19 11"><rect x="0.5" y="0.5" width="11" height="10" fill="#fff" stroke="#7a7a7a"/><rect x="0" y="0" width="12" height="2" fill="#4a7fbf"/><path d="M0.5 4H11.5M0.5 7H11.5M4.2 2V10.5M7.8 2V10.5" stroke="#9a9a9a" stroke-width="0.8"/><path d="M13 8H18L15.5 10.5Z" fill="#555"/></svg>
<svg class="a" style="left:201px;top:175px;" width="14" height="11" viewBox="0 0 14 11"><text x="-0.2" y="9" font-family="Liberation Sans" font-size="8.6" fill="#ffffff">A</text><text x="5.4" y="5.9" font-family="Liberation Sans" font-size="7.8" fill="#ffffff">B</text><text x="8.6" y="12" font-family="Liberation Sans" font-size="8.4" fill="#ffffff">C</text></svg>
<div class="a" style="left:221.00px;top:176.20px;font-size:10px;line-height:12px;color:#ffffff;font-weight:bold;font-family:'Liberation Sans';;transform:scaleX(1.0202);transform-origin:0 50%;-webkit-text-stroke:0;">Name</div>
<svg class="a" style="left:363px;top:173.5px;" width="15" height="15" viewBox="0 0 15 15"><rect x="0" y="0" width="14.6" height="14.5" fill="#fff"/><path d="M4 6H10.6L7.3 9.3Z" fill="#666"/></svg>
<svg class="a" style="left:383px;top:173px;" width="15" height="16" viewBox="0 0 15 16"><text x="0.2" y="7.6" font-family="Liberation Sans" font-size="7.2" fill="#555" textLength="12" lengthAdjust="spacingAndGlyphs">ABC</text><text x="0" y="15" font-family="Liberation Sans" font-size="8.6" fill="#555" textLength="12.5" lengthAdjust="spacingAndGlyphs">123</text></svg>
<div class="a" style="left:403.00px;top:176.20px;font-size:10px;line-height:12px;color:#4a4846;font-weight:bold;font-family:'Liberation Sans';;transform:scaleX(0.9867);transform-origin:0 50%;-webkit-text-stroke:0;">Data</div>
<svg class="a" style="left:512px;top:173px;" width="15" height="15" viewBox="0 0 15 15"><rect x="0.5" y="0.5" width="14" height="14" fill="#fff" stroke="#d2d2d2"/><path d="M1.4 7L4.6 4.3V9.7Z M13.6 7L10.4 4.3V9.7Z" fill="#555"/><path d="M4.2 7H6.6V11.6M10.8 7H8.4V11.6" stroke="#555" stroke-width="1.1" fill="none"/></svg>
<svg class="a" style="left:531px;top:175px;" width="14" height="12" viewBox="0 0 14 12"><text x="-0.2" y="9" font-family="Liberation Sans" font-size="8.6" fill="#3b3a39">A</text><text x="5.4" y="5.9" font-family="Liberation Sans" font-size="7.8" fill="#3b3a39">B</text><text x="8.6" y="12" font-family="Liberation Sans" font-size="8.4" fill="#3b3a39">C</text></svg>
<div class="a" style="left:551.80px;top:176.20px;font-size:10px;line-height:12px;color:#4a4846;font-weight:bold;font-family:'Liberation Sans';;transform:scaleX(0.9229);transform-origin:0 50%;-webkit-text-stroke:0;">Schema</div>
<svg class="a" style="left:661px;top:173px;" width="15" height="15" viewBox="0 0 15 15"><rect x="0.5" y="0.5" width="14" height="14" fill="#fff" stroke="#dcdcdc"/><path d="M4 6H11L7.5 9.5Z" fill="#666"/></svg>
<svg class="a" style="left:680px;top:175px;" width="14" height="12" viewBox="0 0 14 12"><text x="-0.2" y="9" font-family="Liberation Sans" font-size="8.6" fill="#3b3a39">A</text><text x="5.4" y="5.9" font-family="Liberation Sans" font-size="7.8" fill="#3b3a39">B</text><text x="8.6" y="12" font-family="Liberation Sans" font-size="8.4" fill="#3b3a39">C</text></svg>
<div class="a" style="left:700.50px;top:176.20px;font-size:10px;line-height:12px;color:#4a4846;font-weight:bold;font-family:'Liberation Sans';;transform:scaleX(1.0310);transform-origin:0 50%;-webkit-text-stroke:0;">Item</div>
<svg class="a" style="left:814px;top:173px;" width="15" height="15" viewBox="0 0 15 15"><rect x="0.5" y="0.5" width="14" height="14" fill="#fff" stroke="#dcdcdc"/><path d="M4 6H11L7.5 9.5Z" fill="#666"/></svg>
<svg class="a" style="left:833px;top:175px;" width="14" height="12" viewBox="0 0 14 12"><text x="-0.2" y="9" font-family="Liberation Sans" font-size="8.6" fill="#3b3a39">A</text><text x="5.4" y="5.9" font-family="Liberation Sans" font-size="7.8" fill="#3b3a39">B</text><text x="8.6" y="12" font-family="Liberation Sans" font-size="8.4" fill="#3b3a39">C</text></svg>
<div class="a" style="left:854.60px;top:176.20px;font-size:10px;line-height:12px;color:#4a4846;font-weight:bold;font-family:'Liberation Sans';;transform:scaleX(0.8956);transform-origin:0 50%;-webkit-text-stroke:0;">Kind</div>
<svg class="a" style="left:963px;top:173px;" width="15" height="15" viewBox="0 0 15 15"><rect x="0.5" y="0.5" width="14" height="14" fill="#fff" stroke="#dcdcdc"/><path d="M4 6H11L7.5 9.5Z" fill="#666"/></svg>
<div class="a" style="left:182.19px;top:198.55px;font-size:10.8px;line-height:13px;color:#605e5c;font-weight:normal;font-family:'Liberation Sans';;">1</div>
<div class="a" style="left:201.50px;top:199.05px;font-size:9.8px;line-height:12px;color:#323130;font-weight:normal;font-family:'Liberation Sans';;transform:scaleX(1.0535);transform-origin:0 50%;">__EFMigrationsHistory</div>
<div class="a" style="left:383.60px;top:199.05px;font-size:9.8px;line-height:12px;color:#1f6b62;font-weight:normal;font-family:'Liberation Sans';;transform:scaleX(1.0332);transform-origin:0 50%;">Table</div>
<div class="a" style="left:532.00px;top:199.05px;font-size:9.8px;line-height:12px;color:#323130;font-weight:normal;font-family:'Liberation Sans';;transform:scaleX(1.1003);transform-origin:0 50%;">dbo</div>
<div class="a" style="left:680.50px;top:199.05px;font-size:9.8px;line-height:12px;color:#323130;font-weight:normal;font-family:'Liberation Sans';;transform:scaleX(1.0495);transform-origin:0 50%;">__EFMigrationsHistory</div>
<div class="a" style="left:834.80px;top:199.05px;font-size:9.8px;line-height:12px;color:#323130;font-weight:normal;font-family:'Liberation Sans';;transform:scaleX(1.0759);transform-origin:0 50%;">Table</div>
<div class="a" style="left:182.19px;top:217.15px;font-size:10.8px;line-height:13px;color:#605e5c;font-weight:normal;font-family:'Liberation Sans';;">2</div>
<div class="a" style="left:201.50px;top:217.65px;font-size:9.8px;line-height:12px;color:#323130;font-weight:normal;font-family:'Liberation Sans';;transform:scaleX(1.0086);transform-origin:0 50%;">Categories</div>
<div class="a" style="left:383.60px;top:217.65px;font-size:9.8px;line-height:12px;color:#1f6b62;font-weight:normal;font-family:'Liberation Sans';;transform:scaleX(1.0332);transform-origin:0 50%;">Table</div>
<div class="a" style="left:532.00px;top:217.65px;font-size:9.8px;line-height:12px;color:#323130;font-weight:normal;font-family:'Liberation Sans';;transform:scaleX(1.1003);transform-origin:0 50%;">dbo</div>
<div class="a" style="left:680.50px;top:217.65px;font-size:9.8px;line-height:12px;color:#323130;font-weight:normal;font-family:'Liberation Sans';;transform:scaleX(1.0297);transform-origin:0 50%;">Categories</div>
<div class="a" style="left:834.80px;top:217.65px;font-size:9.8px;line-height:12px;color:#323130;font-weight:normal;font-family:'Liberation Sans';;transform:scaleX(1.0759);transform-origin:0 50%;">Table</div>
<div class="a" style="left:182.19px;top:237.35px;font-size:10.8px;line-height:13px;color:#605e5c;font-weight:normal;font-family:'Liberation Sans';;">3</div>
<div class="a" style="left:201.50px;top:237.85px;font-size:9.8px;line-height:12px;color:#323130;font-weight:normal;font-family:'Liberation Sans';;transform:scaleX(1.0450);transform-origin:0 50%;">CategorizationParticipants</div>
<div class="a" style="left:383.60px;top:237.85px;font-size:9.8px;line-height:12px;color:#1f6b62;font-weight:normal;font-family:'Liberation Sans';;transform:scaleX(1.0332);transform-origin:0 50%;">Table</div>
<div class="a" style="left:532.00px;top:237.85px;font-size:9.8px;line-height:12px;color:#323130;font-weight:normal;font-family:'Liberation Sans';;transform:scaleX(1.1003);transform-origin:0 50%;">dbo</div>
<div class="a" style="left:680.50px;top:237.85px;font-size:9.8px;line-height:12px;color:#323130;font-weight:normal;font-family:'Liberation Sans';;transform:scaleX(1.0493);transform-origin:0 50%;">CategorizationParticipants</div>
<div class="a" style="left:834.80px;top:237.85px;font-size:9.8px;line-height:12px;color:#323130;font-weight:normal;font-family:'Liberation Sans';;transform:scaleX(1.0759);transform-origin:0 50%;">Table</div>
<div class="a" style="left:182.19px;top:256.45px;font-size:10.8px;line-height:13px;color:#605e5c;font-weight:normal;font-family:'Liberation Sans';;">4</div>
<div class="a" style="left:201.50px;top:256.95px;font-size:9.8px;line-height:12px;color:#323130;font-weight:normal;font-family:'Liberation Sans';;transform:scaleX(1.0356);transform-origin:0 50%;">Categorizations</div>
<div class="a" style="left:383.60px;top:256.95px;font-size:9.8px;line-height:12px;color:#1f6b62;font-weight:normal;font-family:'Liberation Sans';;transform:scaleX(1.0332);transform-origin:0 50%;">Table</div>
<div class="a" style="left:532.00px;top:256.95px;font-size:9.8px;line-height:12px;color:#323130;font-weight:normal;font-family:'Liberation Sans';;transform:scaleX(1.1003);transform-origin:0 50%;">dbo</div>
<div class="a" style="left:680.50px;top:256.95px;font-size:9.8px;line-height:12px;color:#323130;font-weight:normal;font-family:'Liberation Sans';;transform:scaleX(1.0473);transform-origin:0 50%;">Categorizations</div>
<div class="a" style="left:834.80px;top:256.95px;font-size:9.8px;line-height:12px;color:#323130;font-weight:normal;font-family:'Liberation Sans';;transform:scaleX(1.0759);transform-origin:0 50%;">Table</div>
<div class="a" style="left:182.19px;top:276.65px;font-size:10.8px;line-height:13px;color:#605e5c;font-weight:normal;font-family:'Liberation Sans';;">5</div>
<div class="a" style="left:201.50px;top:277.15px;font-size:9.8px;line-height:12px;color:#323130;font-weight:normal;font-family:'Liberation Sans';;transform:scaleX(0.9930);transform-origin:0 50%;">Emails</div>
<div class="a" style="left:383.60px;top:277.15px;font-size:9.8px;line-height:12px;color:#1f6b62;font-weight:normal;font-family:'Liberation Sans';;transform:scaleX(1.0332);transform-origin:0 50%;">Table</div>
<div class="a" style="left:532.00px;top:277.15px;font-size:9.8px;line-height:12px;color:#323130;font-weight:normal;font-family:'Liberation Sans';;transform:scaleX(1.1003);transform-origin:0 50%;">dbo</div>
<div class="a" style="left:680.50px;top:277.15px;font-size:9.8px;line-height:12px;color:#323130;font-weight:normal;font-family:'Liberation Sans';;transform:scaleX(1.0202);transform-origin:0 50%;">Emails</div>
<div class="a" style="left:834.80px;top:277.15px;font-size:9.8px;line-height:12px;color:#323130;font-weight:normal;font-family:'Liberation Sans';;transform:scaleX(1.0759);transform-origin:0 50%;">Table</div>
<div class="a" style="left:182.19px;top:296.05px;font-size:10.8px;line-height:13px;color:#605e5c;font-weight:normal;font-family:'Liberation Sans';;">6</div>
<div class="a" style="left:201.50px;top:296.55px;font-size:9.8px;line-height:12px;color:#323130;font-weight:normal;font-family:'Liberation Sans';;transform:scaleX(1.0452);transform-origin:0 50%;">Participants</div>
<div class="a" style="left:383.60px;top:296.55px;font-size:9.8px;line-height:12px;color:#1f6b62;font-weight:normal;font-family:'Liberation Sans';;transform:scaleX(1.0332);transform-origin:0 50%;">Table</div>
<div class="a" style="left:532.00px;top:296.55px;font-size:9.8px;line-height:12px;color:#323130;font-weight:normal;font-family:'Liberation Sans';;transform:scaleX(1.1003);transform-origin:0 50%;">dbo</div>
<div class="a" style="left:680.50px;top:296.55px;font-size:9.8px;line-height:12px;color:#323130;font-weight:normal;font-family:'Liberation Sans';;transform:scaleX(1.0706);transform-origin:0 50%;">Participants</div>
<div class="a" style="left:834.80px;top:296.55px;font-size:9.8px;line-height:12px;color:#323130;font-weight:normal;font-family:'Liberation Sans';;transform:scaleX(1.0759);transform-origin:0 50%;">Table</div>
<div class="a" style="left:182.19px;top:315.25px;font-size:10.8px;line-height:13px;color:#605e5c;font-weight:normal;font-family:'Liberation Sans';;">7</div>
<div class="a" style="left:201.50px;top:315.75px;font-size:9.8px;line-height:12px;color:#323130;font-weight:normal;font-family:'Liberation Sans';;transform:scaleX(1.0377);transform-origin:0 50%;">sys.database_firewall_rules</div>
<div class="a" style="left:383.60px;top:315.75px;font-size:9.8px;line-height:12px;color:#1f6b62;font-weight:normal;font-family:'Liberation Sans';;transform:scaleX(1.0332);transform-origin:0 50%;">Table</div>
<div class="a" style="left:532.00px;top:315.75px;font-size:9.8px;line-height:12px;color:#323130;font-weight:normal;font-family:'Liberation Sans';;transform:scaleX(0.9522);transform-origin:0 50%;">sys</div>
<div class="a" style="left:680.50px;top:315.75px;font-size:9.8px;line-height:12px;color:#323130;font-weight:normal;font-family:'Liberation Sans';;transform:scaleX(1.0618);transform-origin:0 50%;">database_firewall_rules</div>
<div class="a" style="left:834.80px;top:315.75px;font-size:9.8px;line-height:12px;color:#323130;font-weight:normal;font-family:'Liberation Sans';;transform:scaleX(1.0825);transform-origin:0 50%;">View</div>
<div class="a" style="left:1038.00px;top:142.10px;font-size:12px;line-height:14px;color:#605e5c;font-weight:normal;font-family:'Liberation Sans';;-webkit-text-stroke:0;">Query Settings</div>
<svg class="a" style="left:1238px;top:142px;" width="12" height="12" viewBox="0 0 12 12"><path d="M1 1L11 11M11 1L1 11" stroke="#6a6a6a" stroke-width="1.05"/></svg>
<svg class="a" style="left:1036px;top:174.5px;" width="7" height="6" viewBox="0 0 7 6"><path d="M6 0.4V5.6H0.4Z" fill="#484644"/></svg>
<div class="a" style="left:1049.00px;top:172.60px;font-size:11px;line-height:13px;color:#252423;font-weight:bold;font-family:'Liberation Sans';;transform:scaleX(0.9082);transform-origin:0 50%;-webkit-text-stroke:0;">PROPERTIES</div>
<div class="a" style="left:1049.00px;top:191.25px;font-size:10.6px;line-height:13px;color:#323130;font-weight:normal;font-family:'Liberation Sans';;transform:scaleX(1.0224);transform-origin:0 50%;">Name</div>
<div class="a" style="left:1049px;top:205px;width:202px;height:21px;background:#ffffff;border:1px solid #c8c6c4"></div>
<div class="a" style="left:1054.80px;top:211.10px;font-size:11.2px;line-height:13px;color:#484644;font-weight:normal;font-family:'Liberation Sans';;transform:scaleX(0.9074);transform-origin:0 50%;-webkit-text-stroke:0;">Categories</div>
<div class="a" style="left:1049.00px;top:233.95px;font-size:11.4px;line-height:14px;color:#2b6b84;font-weight:normal;font-family:'Liberation Sans';;transform:scaleX(0.9594);transform-origin:0 50%;-webkit-text-stroke:0;">All Properties</div>
<svg class="a" style="left:1036px;top:269px;" width="7" height="6" viewBox="0 0 7 6"><path d="M6 0.4V5.1H0.4Z" fill="#484644"/></svg>
<div class="a" style="left:1049.00px;top:266.60px;font-size:10.7px;line-height:13px;color:#252423;font-weight:bold;font-family:'Liberation Sans';;transform:scaleX(0.9366);transform-origin:0 50%;-webkit-text-stroke:0;">APPLIED STEPS</div>
<div class="a" style="left:1049px;top:284px;width:202px;height:368px;background:none;border:1px solid #c8c6c4"></div>
<div class="a" style="left:1050px;top:285px;width:200px;height:19.5px;background:#c8c6c4;"></div>
<div class="a" style="left:1049px;top:285px;width:2px;height:19.5px;background:#117865;"></div>
<div class="a" style="left:1070.00px;top:289.30px;font-size:11.2px;line-height:13px;color:#323130;font-weight:normal;font-family:'Liberation Sans';;transform:scaleX(0.9477);transform-origin:0 50%;-webkit-text-stroke:0;">Source</div>
<div class="a" style="left:1070.00px;top:307.80px;font-size:11.2px;line-height:13px;color:#323130;font-weight:normal;font-family:'Liberation Sans';;transform:scaleX(1.0061);transform-origin:0 50%;-webkit-text-stroke:0;">Navigation</div>
<svg class="a" style="left:1233px;top:289.5px;" width="11" height="11" viewBox="0 0 11 11"><g fill="#a8a8a8"><circle cx="5.5" cy="5.5" r="3.4"/><path d="M4.6 0.3H6.4V2.3H4.6ZM4.6 8.7H6.4V10.7H4.6ZM0.3 4.6H2.3V6.4H0.3ZM8.7 4.6H10.7V6.4H8.7Z"/><path d="M1.6 3L3 1.6L4.2 2.8L2.8 4.2ZM8 6.8L9.4 8.2L8.2 9.4L6.8 8ZM8 1.6L9.4 3L8.2 4.2L6.8 2.8ZM1.6 8L3 9.4L4.2 8.2L2.8 6.8Z"/></g><circle cx="5.5" cy="5.5" r="1.4" fill="#f3f2f1"/></svg>
<svg class="a" style="left:1233px;top:308.5px;" width="11" height="11" viewBox="0 0 11 11"><g fill="#9a9a9a"><circle cx="5.5" cy="5.5" r="3.4"/><path d="M4.6 0.3H6.4V2.3H4.6ZM4.6 8.7H6.4V10.7H4.6ZM0.3 4.6H2.3V6.4H0.3ZM8.7 4.6H10.7V6.4H8.7Z"/><path d="M1.6 3L3 1.6L4.2 2.8L2.8 4.2ZM8 6.8L9.4 8.2L8.2 9.4L6.8 8ZM8 1.6L9.4 3L8.2 4.2L6.8 2.8ZM1.6 8L3 9.4L4.2 8.2L2.8 6.8Z"/></g><circle cx="5.5" cy="5.5" r="1.4" fill="#f3f2f1"/></svg>
<div class="a" style="left:4.80px;top:679.90px;font-size:11.2px;line-height:13px;color:#323130;font-weight:normal;font-family:'Liberation Sans';;transform:scaleX(0.8476);transform-origin:0 50%;-webkit-text-stroke:0;">5 COLUMNS, 7 ROWS</div>
<div class="a" style="left:117.00px;top:679.90px;font-size:11.2px;line-height:13px;color:#323130;font-weight:normal;font-family:'Liberation Sans';;transform:scaleX(0.9210);transform-origin:0 50%;-webkit-text-stroke:0;">Column profiling based on top 1000 rows</div>
<div class="a" style="left:1094.00px;top:680.00px;font-size:11.2px;line-height:13px;color:#323130;font-weight:normal;font-family:'Liberation Sans';;transform:scaleX(0.8688);transform-origin:0 50%;-webkit-text-stroke:0;">PREVIEW DOWNLOADED AT 11:22 AM</div>
<div class="a" style="left:3.5px;top:276px;width:167px;height:56.5px;background:none;border:2px solid #ee3b3d;box-shadow:1px 2px 3px rgba(0,0,0,.35), inset 0 2px 2px rgba(0,0,0,.15)"></div>
<div class="a" style="left:277px;top:141.5px;width:221px;height:26.5px;background:none;border:2px solid #ee3b3d;box-shadow:1px 2px 3px rgba(0,0,0,.35), inset 0 2px 2px rgba(0,0,0,.15)"></div>
<svg class="a" style="left:1000px;top:280px;filter:drop-shadow(1px 1px 1px rgba(0,0,0,.35))" width="70" height="45" viewBox="0 0 70 45"><path d="M20.5 28.5L52 16" stroke="#e8353b" stroke-width="2.6"/><path d="M57 14L47.5 12.3L51 21.5Z" fill="#e8353b"/></svg>
<div class="a" style="left:146.4px;top:322.79999999999995px;width:23.2px;height:23.2px;border-radius:50%;background:#f04343;box-shadow:1px 2px 3px rgba(0,0,0,.45);border:1px solid #d93636"></div>
<div class="a" style="left:153.83px;top:326.40px;font-size:15px;line-height:18px;color:#ffffff;font-weight:bold;font-family:'Liberation Sans';;-webkit-text-stroke:0;">1</div>
<div class="a" style="left:1002.4px;top:307.0px;width:23.2px;height:23.2px;border-radius:50%;background:#f04343;box-shadow:1px 2px 3px rgba(0,0,0,.45);border:1px solid #d93636"></div>
<div class="a" style="left:1009.83px;top:310.60px;font-size:15px;line-height:18px;color:#ffffff;font-weight:bold;font-family:'Liberation Sans';;-webkit-text-stroke:0;">2</div>
<div class="a" style="left:483.4px;top:150.9px;width:23.2px;height:23.2px;border-radius:50%;background:#f04343;box-shadow:1px 2px 3px rgba(0,0,0,.45);border:1px solid #d93636"></div>
<div class="a" style="left:490.83px;top:154.50px;font-size:15px;line-height:18px;color:#ffffff;font-weight:bold;font-family:'Liberation Sans';;-webkit-text-stroke:0;">3</div>
<svg class="a" style="left:732px;top:129px;" width="12" height="16" viewBox="0 0 12 16"><path d="M0.5 0.5V12L3.5 9.5L5.5 14L7.5 13L5.5 8.8H9.5Z" fill="#fff" stroke="#333" stroke-width="0.9"/></svg>
<div class="a" style="left:0px;top:0px;width:4px;height:4px;background:radial-gradient(circle at 0 0, rgba(60,50,80,.95) 0, rgba(60,50,80,.6) 1.5px, rgba(255,255,255,0) 3.5px);"></div>
<div class="a" style="left:1269px;top:0px;width:4px;height:3px;background:radial-gradient(circle at 100% 0, rgba(70,60,100,.9) 0, rgba(70,60,100,.5) 1.2px, rgba(255,255,255,0) 3px);"></div>
</body></html>
